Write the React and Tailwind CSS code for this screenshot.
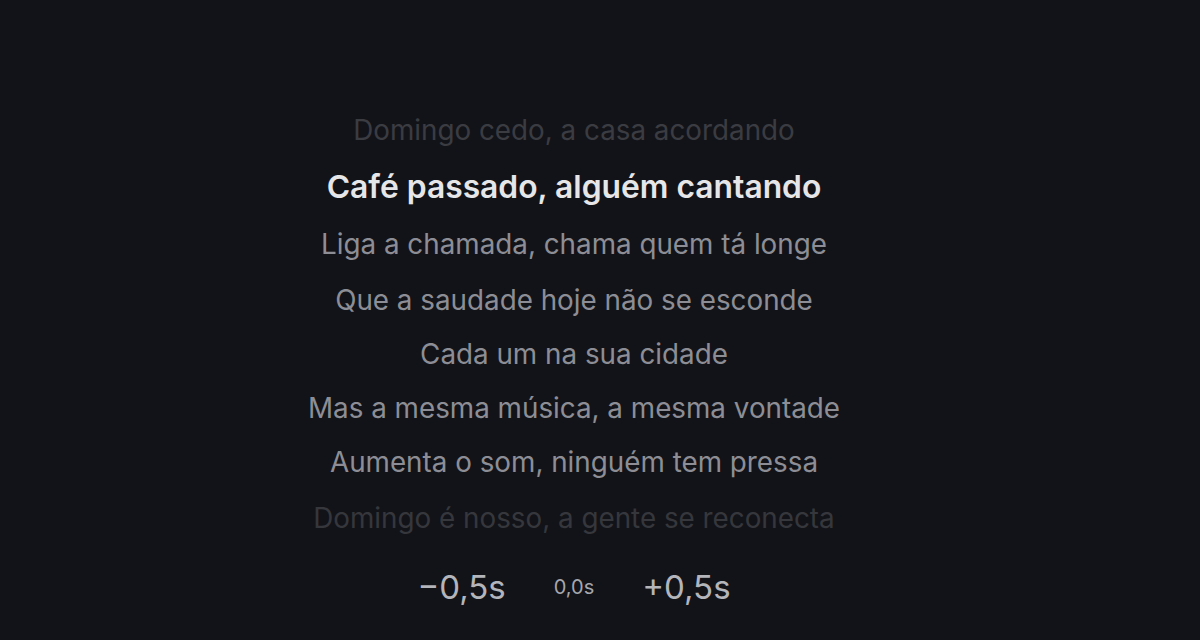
const LINES = [
  { text: 'Domingo cedo, a casa acordando', state: 'past', gap: 'mb-4' },
  { text: 'Café passado, alguém cantando', state: 'current', gap: 'mb-4' },
  { text: 'Liga a chamada, chama quem tá longe', state: 'next', gap: 'mb-[18px]' },
  { text: 'Que a saudade hoje não se esconde', state: 'next', gap: 'mb-4' },
  { text: 'Cada um na sua cidade', state: 'next', gap: 'mb-4' },
  { text: 'Mas a mesma música, a mesma vontade', state: 'next', gap: 'mb-4' },
  { text: 'Aumenta o som, ninguém tem pressa', state: 'next', gap: 'mb-[18px]' },
  { text: 'Domingo é nosso, a gente se reconecta', state: 'fade', gap: 'mb-4' },
];

const LINE_STYLE = {
  past: 'text-[27.8px] leading-[38px] text-[#3b3c42]',
  current: 'text-[31.8px] leading-[44px] font-semibold text-[#e6e6e9]',
  next: 'text-[27.8px] leading-[38px] text-[#8d8e95]',
  fade: 'text-[27.8px] leading-[38px] text-[#36373c]',
};

export default function App() {
  return (
    <div
      className="w-full h-[640px] bg-[#121318] flex flex-col items-center pr-[52px]"
      style={{ fontFamily: 'Inter, "Noto Sans", sans-serif' }}
    >
      {/* Lyrics */}
      <div className="flex flex-col items-center pt-[111px]">
        {LINES.map((l, i) => (
          <p key={i} className={`${l.gap} ${LINE_STYLE[l.state]}`}>
            {l.text}
          </p>
        ))}
      </div>

      {/* Offset controls */}
      <div className="flex items-center gap-12 mt-[14px] text-[#b4b5bb]">
        <button className="text-[33px] leading-[40px]">−0,5s</button>
        <span className="text-[20px] text-[#a6a7ad]">0,0s</span>
        <button className="text-[33px] leading-[40px]">+0,5s</button>
      </div>
    </div>
  );
}
